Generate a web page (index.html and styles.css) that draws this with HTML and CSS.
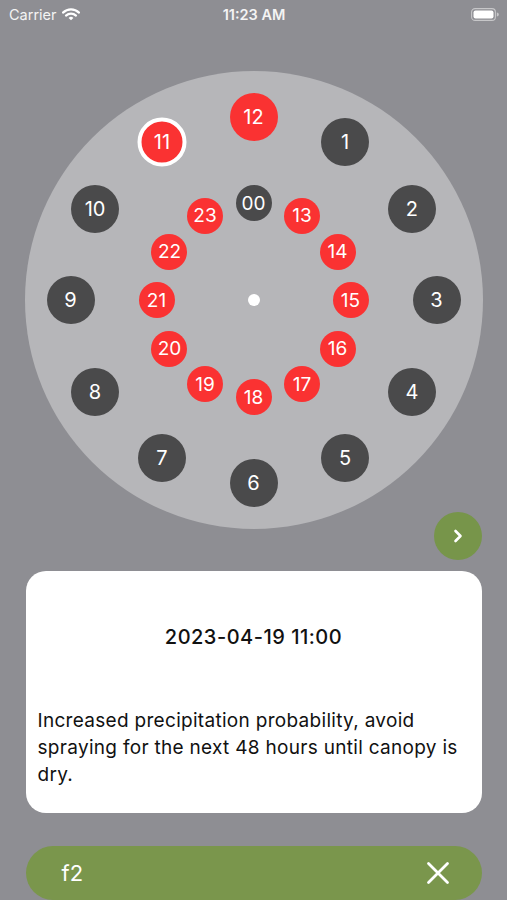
FILE: index.html
```html
<!DOCTYPE html>
<html lang="en">
<head>
    <meta charset="UTF-8">
    <meta name="viewport" content="width=device-width, initial-scale=1.0">
    <title>Spray forecast</title>
    <link rel="stylesheet" href="styles.css">
</head>
<body>
    <div class="screen">
        <div class="status">
            <div class="status-left">
                <span>Carrier</span>
                <svg class="wifi" width="18" height="13" viewBox="0 0 18 13">
                    <path d="M1 4.6 A11.5 11.5 0 0 1 17 4.6" fill="none" stroke="#fff" stroke-width="2.2" stroke-linecap="round"/>
                    <path d="M4 7.6 A7.2 7.2 0 0 1 14 7.6" fill="none" stroke="#fff" stroke-width="2.2" stroke-linecap="round"/>
                    <path d="M9 12.3 L6.6 9.9 A3.4 3.4 0 0 1 11.4 9.9 Z" fill="#fff"/>
                </svg>
            </div>
            <span class="clock">11:23 AM</span>
            <svg class="battery" width="28" height="13" viewBox="0 0 28 13">
                <rect x="0.6" y="0.6" width="23.8" height="11.8" rx="3.5" fill="none" stroke="#fff" stroke-opacity="0.5" stroke-width="1.1"/>
                <rect x="2.5" y="2.5" width="20" height="8" rx="2" fill="#fff"/>
                <path d="M25.8 4.5 A2 2 0 0 1 25.8 8.5 Z" fill="#fff" fill-opacity="0.5"/>
            </svg>
        </div>

        <div class="dial" id="dial">
            <div class="hub"></div>
        </div>

        <div class="next-row">
            <button class="next">
                <svg width="14" height="16" viewBox="0 0 14 16">
                    <path d="M4.5 3 L9.5 8 L4.5 13" fill="none" stroke="#fff" stroke-width="2.6" stroke-linecap="round" stroke-linejoin="round"/>
                </svg>
            </button>
        </div>

        <div class="card">
            <div class="card-title">2023-04-19 11:00</div>
            <p class="card-text">Increased precipitation probability, avoid spraying for the next 48 hours until canopy is dry.</p>
        </div>

        <div class="field-bar">
            <span class="field-name">f2</span>
            <svg width="24" height="24" viewBox="0 0 24 24">
                <path d="M2.5 2.5 L21.5 21.5 M21.5 2.5 L2.5 21.5" stroke="#fff" stroke-width="2.8" stroke-linecap="round"/>
            </svg>
        </div>
    </div>

    <script>
        const dial = document.getElementById('dial');
        const cx = 229, cy = 229;

        // outer ring 12,1..11 ; inner ring 00,13..23
        const outer = [12, 1, 2, 3, 4, 5, 6, 7, 8, 9, 10, 11];
        const inner = ['00', 13, 14, 15, 16, 17, 18, 19, 20, 21, 22, 23];
        const redOuter = [11, 12];

        function place(label, i, r, cls) {
            const a = i * Math.PI / 6;
            const el = document.createElement('div');
            el.className = 'hour ' + cls;
            el.textContent = label;
            el.style.left = (cx + r * Math.sin(a)) + 'px';
            el.style.top = (cy - r * Math.cos(a)) + 'px';
            dial.appendChild(el);
            return el;
        }

        outer.forEach(function(h, i) {
            const el = place(h, i, 183, 'big ' + (redOuter.includes(h) ? 'red' : 'dark'));
            if (h === 11) el.classList.add('selected');
        });
        inner.forEach(function(h, i) {
            place(h, i, 97, 'small ' + (h === '00' ? 'dark' : 'red'));
        });
    </script>
</body>
</html>
```

FILE: styles.css
```css
body {
    margin: 0;
    background-color: #8e8e93;
    font-family: Inter, "Liberation Sans", sans-serif;
}

.screen {
    width: 507px;
    height: 900px;
    overflow: hidden;
    display: flex;
    flex-direction: column;
    align-items: center;
}

.status {
    width: 100%;
    box-sizing: border-box;
    height: 28px;
    padding: 0 8px 0 9px;
    display: flex;
    align-items: center;
    justify-content: space-between;
    color: #f4f4f4;
    font-size: 14.5px;
}
.status-left {
    display: flex;
    align-items: center;
    gap: 5px;
    width: 90px;
}
.clock {
    font-weight: 600;
}
.status .battery {
    width: 28px;
    margin-left: 62px;
}

.dial {
    margin-top: 43px;
    width: 458px;
    height: 458px;
    border-radius: 50%;
    background-color: #b6b6b9;
    position: relative;
    flex-shrink: 0;
}
.hub {
    position: absolute;
    left: 223px;
    top: 223px;
    width: 12px;
    height: 12px;
    border-radius: 50%;
    background-color: #fff;
}
.hour {
    position: absolute;
    transform: translate(-50%, -50%);
    border-radius: 50%;
    color: #fff;
    display: flex;
    align-items: center;
    justify-content: center;
    box-sizing: border-box;
}
.hour.big {
    width: 48px;
    height: 48px;
    font-size: 20px;
}
.hour.small {
    width: 36px;
    height: 36px;
    font-size: 19px;
}
.red {
    background-color: #fa3232;
}
.dark {
    background-color: #4a4a4b;
}
.hour.selected {
    width: 49px;
    height: 49px;
    border: 4px solid #fff;
}

.next-row {
    width: 456px;
    display: flex;
    justify-content: flex-end;
    margin-top: -17px;
}
.next {
    width: 48px;
    height: 48px;
    border-radius: 50%;
    border: none;
    background-color: #77954a;
    display: flex;
    align-items: center;
    justify-content: center;
    padding: 0;
}

.card {
    margin-top: 11px;
    width: 456px;
    height: 242px;
    box-sizing: border-box;
    background-color: #fff;
    border-radius: 20px;
    padding: 54px 12px 0 12px;
    color: #111;
}
.card-title {
    text-align: center;
    font-size: 20px;
    font-weight: 500;
    line-height: 24px;
    letter-spacing: 0.5px;
}
.card-text {
    margin: 58px 0 0 0;
    font-size: 19px;
    line-height: 27px;
    letter-spacing: 0.3px;
}

.field-bar {
    margin-top: 33px;
    width: 456px;
    height: 54px;
    flex-shrink: 0;
    box-sizing: border-box;
    border-radius: 27px;
    background-color: #7a964c;
    display: flex;
    align-items: center;
    justify-content: space-between;
    padding: 0 32px 0 36px;
    color: #fff;
}
.field-name {
    font-size: 22px;
}
```
